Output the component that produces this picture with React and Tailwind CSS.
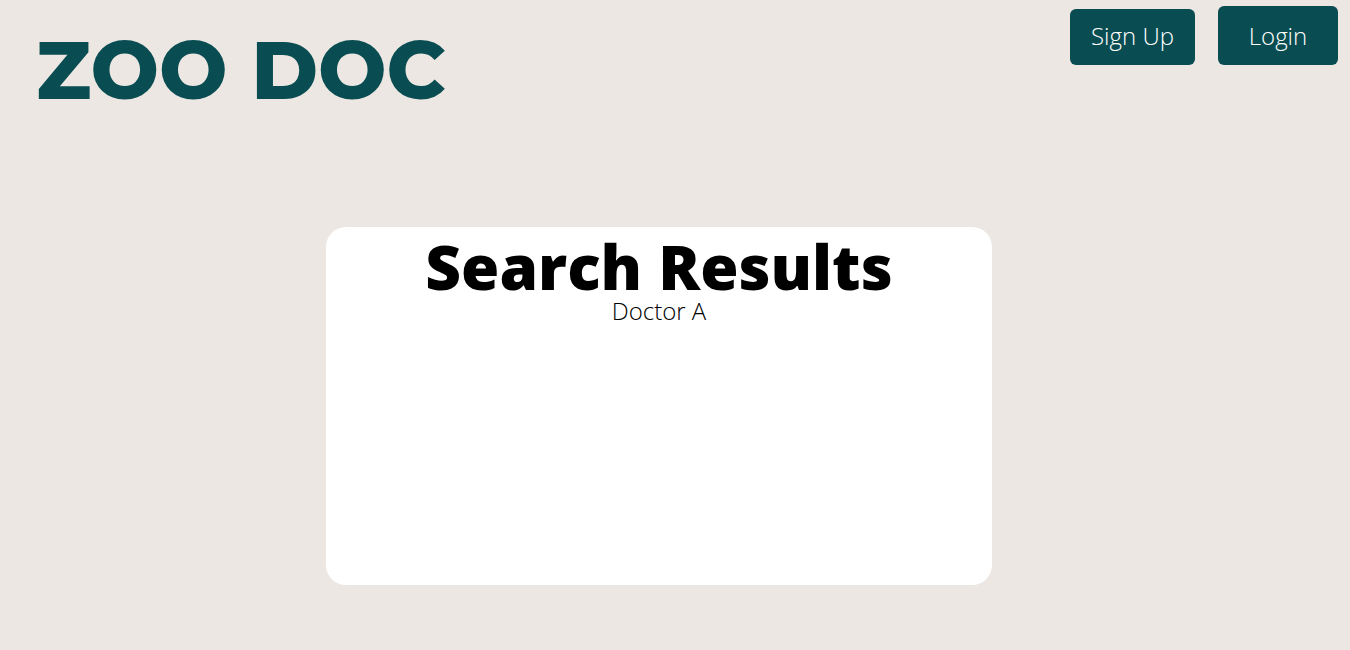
export default function App() {
  return (
    <div className="flex min-h-screen flex-col bg-[#ece7e3] font-['Open_Sans',sans-serif] text-black">
      <header className="flex items-start justify-between pl-9 pr-3 pt-1.5">
        <h1 className="pt-5 font-['Montserrat','Inter',sans-serif] text-[81px] leading-[88px] font-extrabold text-[#094d52]">
          ZOO DOC
        </h1>
        <nav aria-label="Account" className="flex items-end gap-[23px]">
          <button type="button" className="h-14 w-[125px] rounded-md bg-[#094d52] pb-0.5 text-2xl font-light text-white">
            Sign Up
          </button>
          <button type="button" className="h-[59px] w-[120px] rounded-md bg-[#094d52] text-2xl font-light text-white">
            Login
          </button>
        </nav>
      </header>
      <main className="flex justify-center pt-[113px] pr-8">
        <section className="min-h-[358px] w-full max-w-[666px] rounded-[20px] bg-white pt-2 text-center">
          <h2 className="text-[62px] leading-[62px] font-extrabold">Search Results</h2>
          <p className="text-2xl leading-7 font-light">Doctor A</p>
        </section>
      </main>
    </div>
  );
}
